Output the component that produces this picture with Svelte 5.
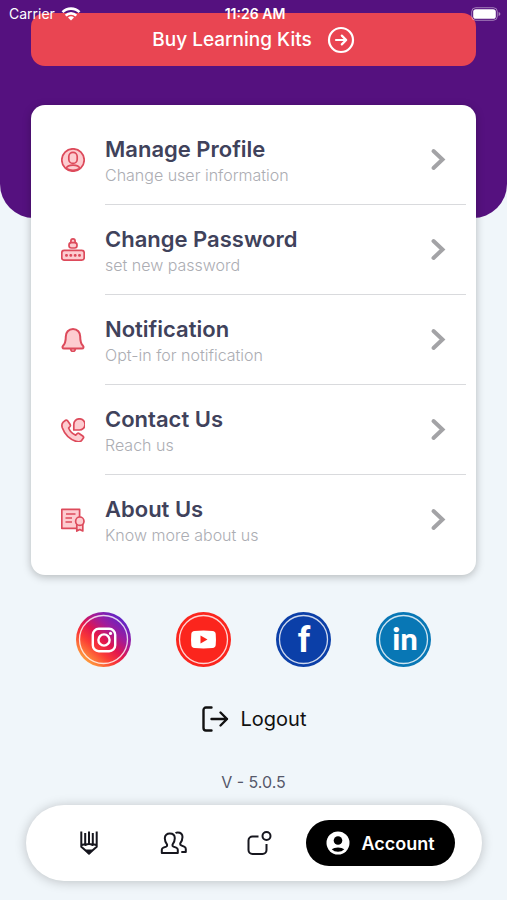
<script>
  const items = [
    { icon: 'profile', title: 'Manage Profile', text: 'Change user information' },
    { icon: 'password', title: 'Change Password', text: 'set new password' },
    { icon: 'bell', title: 'Notification', text: 'Opt-in for notification' },
    { icon: 'phone', title: 'Contact Us', text: 'Reach us' },
    { icon: 'about', title: 'About Us', text: 'Know more about us' }
  ];
</script>

<div class="status">
  <span class="carrier">
    Carrier
    <svg width="20" height="14" viewBox="0 0 20 14" fill="none" stroke="#fff" stroke-width="2.6">
      <path d="M1.5 5.2a12 12 0 0 1 17 0" />
      <path d="M4.7 8.6a7.5 7.5 0 0 1 10.6 0" />
      <path d="M10 13.6 7 10.6a4.3 4.3 0 0 1 6 0z" fill="#fff" stroke="none" />
    </svg>
  </span>
  <span class="time">11:26 AM</span>
  <svg class="battery" width="30" height="14" viewBox="0 0 30 14">
    <rect x="0.7" y="0.7" width="25.6" height="12.6" rx="4" fill="none" stroke="#fff" stroke-opacity="0.45" />
    <rect x="2.2" y="2.2" width="22.6" height="9.6" rx="2.6" fill="#fff" />
    <path d="M27.6 5v4q1.8-.5 1.8-2t-1.8-2z" fill="#fff" fill-opacity="0.5" />
  </svg>
</div>

<main>
  <header>
    <button class="buy">
      Buy Learning Kits
      <svg width="28" height="28" viewBox="0 0 28 28" fill="none" stroke="#fff" stroke-width="2.2" stroke-linecap="round" stroke-linejoin="round">
        <circle cx="14" cy="14" r="12" />
        <path d="M9 14h10M14.8 9.6 19.2 14l-4.4 4.4" />
      </svg>
    </button>
  </header>

  <!-- Menu -->
  <section class="card">
    {#each items as item}
      <button class="row">
        <svg class="icon" viewBox="0 0 24 24">
          {#if item.icon === 'profile'}
            <circle cx="12" cy="12" r="11.2" />
            <rect x="7.8" y="4.4" width="8.4" height="11" rx="4.2" />
            <path d="M5.2 20.4q1-3.2 6.8-3.2t6.8 3.2q-6.8 3.8-13.6 0z" />
          {:else if item.icon === 'password'}
            <rect x="0.8" y="12.4" width="22.4" height="9.8" rx="2.4" />
            <path d="M9.9 4.6V3a2.1 2.1 0 0 1 4.2 0v1.600" />
            <rect x="8" y="4.6" width="8" height="5.4" rx="2.4" />
            <path d="M5.500 16v2.800M4.100 17.400h2.800M9.800 16v2.800M8.400 17.400h2.800M14.200 16v2.800M12.800 17.400h2.800M18.500 16v2.800M17.100 17.400h2.800" />
          {:else if item.icon === 'bell'}
            <path d="M9.500 20.500q.5 3 2.500 3t2.500-3z" />
            <path d="M12 1C7.500 1 4.800 4.400 4.800 8.500c0 5-.6 7.200-2.800 9.300-1 1.200-.5 2.700 1 2.700h18c1.500 0 2-1.500 1-2.700-2.200-2.100-2.800-4.300-2.800-9.300C19.200 4.400 16.500 1 12 1z" stroke-width="2" />
          {:else if item.icon === 'phone'}
            <path d="M2.200 4.100 4.600 2.300q1-.6 1.800.3l2.800 4q.6 1-.2 1.900L7.600 10c1.200 3 4 5.800 7.100 7.100l1.500-1.400q.9-.8 1.900-.2l4 2.800q.9.800.3 1.800l-1.800 2.400c-1.300 1.500-3.500 1.700-5.600.9C8.500 21 3.600 16 1.300 9.700.6 7.600.8 5.500 2.200 4.100z" />
            <path d="M12.800 12V6.400a5.600 5.600 0 1 1 5.600 5.600z" />
          {:else}
            <rect x="0.8" y="1.3" width="17.8" height="19" />
            <path d="M5 6h9.500M4.500 10h6.500M4.500 14h6.500" />
            <path d="M15.800 16h6v7l-3-1.500-3 1.500z" />
            <circle cx="18.800" cy="13.200" r="4.200" />
          {/if}
        </svg>
        <span class="body">
          <span class="label">
            <strong>{item.title}</strong>
            <small>{item.text}</small>
          </span>
          <svg width="16" height="24" viewBox="0 0 16 24" fill="none" stroke="#a3a3a6" stroke-width="4" stroke-linecap="round">
            <path d="M3.500 3 12.500 11.500 3.500 20" />
          </svg>
        </span>
      </button>
    {/each}
  </section>

  <!-- Social links -->
  <div class="social">
    <a href="#instagram" aria-label="Instagram">
      <svg viewBox="0 0 55 55">
        <defs>
          <linearGradient id="insta" x1="0.15" y1="0.9" x2="0.85" y2="0.1">
            <stop offset="0" stop-color="#ffa53d" />
            <stop offset="0.3" stop-color="#fb3b35" />
            <stop offset="0.5" stop-color="#e0154f" />
            <stop offset="0.72" stop-color="#a01c9c" />
            <stop offset="1" stop-color="#5a25cb" />
          </linearGradient>
        </defs>
        <circle cx="27.5" cy="27.5" r="27.5" fill="url(#insta)" />
        <circle class="ring" cx="27.5" cy="27.5" r="24" />
        <g fill="none" stroke="#fff" stroke-width="2.4">
          <rect x="16.8" y="16.8" width="22.4" height="22.4" rx="6" />
          <circle cx="28" cy="28" r="5.6" />
        </g>
        <circle cx="34.5" cy="21.4" r="1.6" fill="#fff" />
      </svg>
    </a>
    <a href="#youtube" aria-label="YouTube">
      <svg viewBox="0 0 55 55">
        <circle cx="27.5" cy="27.5" r="27.5" fill="#fb251d" />
        <circle class="ring" cx="27.5" cy="27.5" r="24" />
        <path d="M18.500 19q9-.8 18 0 3 .3 3.200 3 .5 5.500 0 11-.2 2.700-3.200 3-9 .8-18 0-3-.3-3.200-3-.5-5.500 0-11 .2-2.700 3.200-3z" fill="#fff" />
        <path d="M24.500 23.500v8l7-4z" fill="#fb251d" />
      </svg>
    </a>
    <a href="#facebook" aria-label="Facebook">
      <svg viewBox="0 0 55 55">
        <circle cx="27.5" cy="27.5" r="27.5" fill="#0b3fa8" />
        <circle class="ring" cx="27.5" cy="27.5" r="24" />
        <text class="fb" x="28" y="40">f</text>
      </svg>
    </a>
    <a href="#linkedin" aria-label="LinkedIn">
      <svg viewBox="0 0 55 55">
        <circle cx="27.5" cy="27.5" r="27.5" fill="#0877b5" />
        <circle class="ring" cx="27.5" cy="27.5" r="24" />
        <text class="in" x="29" y="38">in</text>
      </svg>
    </a>
  </div>

  <button class="logout">
    <svg width="28" height="28" viewBox="0 0 28 28" fill="none" stroke="#111" stroke-width="2.4" stroke-linecap="round" stroke-linejoin="round">
      <path d="M10.500 2.500H5a2.500 2.500 0 0 0-2.500 2.500v18a2.500 2.500 0 0 0 2.500 2.500h5.500M10.500 14H26M19.500 7.500 26 14l-6.500 6.500" />
    </svg>
    Logout
  </button>

  <p class="version">V - 5.0.5</p>

  <!-- Tab bar -->
  <nav>
    <a class="tab" href="#learn" aria-label="Learn">
      <svg viewBox="0 0 28 28">
        <path d="M6.300 2.500v15.200L14 24.500l7.700-6.800V2.500M10.200 4v12M14 2.500V15M17.800 4v12M6.300 16.500q2.300-1.500 4-.5 3.700-2 7.400 0 1.700-1 4 .5" />
        <path d="M11.500 21.500h5L14 24.500z" fill="#16161e" />
      </svg>
    </a>
    <a class="tab" href="#community" aria-label="Community">
      <svg viewBox="0 0 28 28">
        <path d="M1.800 24v-3.200q0-1.600 1.600-2.200l2.800-1q1.300-.6.900-2C5.200 13.200 4.800 11.200 4.800 9.200 4.800 6.300 7 4.600 9.800 4.600s5 1.700 5 4.600c0 2-.4 4-2.300 6.400q-.4 1.400.9 2l2.800 1q1.600.6 1.600 2.200V24z" />
        <path d="M15.500 4q1-.6 2.200-.6c2.900 0 4.800 1.800 4.800 4.700 0 2.200-.6 4.200-2.300 6.300q-.3 1.500 1 2l2.900 1.200q1.700.7 1.700 2.400v3h-4.500" />
      </svg>
    </a>
    <a class="tab" href="#updates" aria-label="Updates">
      <svg viewBox="0 0 28 28">
        <path d="M13.500 7.500H7.500a4 4 0 0 0-4 4V21a4 4 0 0 0 4 4h10a4 4 0 0 0 4-4v-6" />
        <circle cx="21.5" cy="7" r="4" />
      </svg>
    </a>
    <a class="account" href="#account">
      <svg width="24" height="24" viewBox="0 0 24 24">
        <circle cx="12" cy="12" r="11.5" fill="#fff" />
        <circle cx="12" cy="9.500" r="4.3" fill="#000" />
        <path d="M5.700 18.200q2.300-1.700 6.300-1.700t6.300 1.700q-2.500 2.500-6.300 2.500t-6.300-2.500z" fill="#000" />
      </svg>
      Account
    </a>
  </nav>
</main>

<style>
  :global(body) {
    margin: 0;
    background: #f0f6fa;
    font-family: Inter, sans-serif;
  }

  button {
    border: none;
    background: none;
    font-family: inherit;
    cursor: pointer;
  }

  a {
    text-decoration: none;
  }

  .status {
    position: absolute;
    top: 0;
    left: 0;
    right: 0;
    z-index: 1;
    display: grid;
    grid-template-columns: 1fr auto 1fr;
    align-items: center;
    height: 27px;
    padding: 0 6px 0 9px;
    color: #fff;
    font-size: 14px;
  }

  .carrier {
    display: flex;
    align-items: center;
    gap: 6px;
  }

  .time {
    font-weight: 600;
  }

  .battery {
    justify-self: end;
  }

  header {
    box-sizing: border-box;
    height: 218px;
    padding: 13px 31px 0;
    background: #55117f;
    border-radius: 0 0 34px 34px;
  }

  .buy {
    display: flex;
    align-items: center;
    justify-content: center;
    gap: 15px;
    width: 100%;
    height: 53px;
    background: #e94552;
    border-radius: 14px;
    color: #fff;
    font-size: 19px;
    font-weight: 500;
  }

  .card {
    margin: -113px 31px 0;
    padding: 10px 0;
    background: #fff;
    border-radius: 14px;
    box-shadow: 0 2px 8px rgba(0, 0, 0, 0.25);
  }

  .row {
    display: flex;
    align-items: center;
    gap: 20px;
    width: 100%;
    padding: 0 10px 0 30px;
    text-align: left;
  }

  .icon {
    flex: none;
    width: 24px;
    height: 24px;
    fill: #fdccd0;
    stroke: #dd4a5b;
    stroke-width: 1.7;
    stroke-linejoin: round;
  }

  .body {
    flex: 1;
    display: flex;
    align-items: center;
    justify-content: space-between;
    box-sizing: border-box;
    height: 90px;
    padding-right: 20px;
    border-bottom: 1px solid #d9dadd;
  }

  .row:last-child .body {
    border-bottom: none;
  }

  .label {
    padding-top: 2px;
  }

  .label strong {
    display: block;
    color: #40425b;
    font-size: 22px;
    font-weight: 600;
    line-height: 28px;
  }

  .label small {
    display: block;
    color: #acadb3;
    font-size: 16px;
    font-weight: 300;
    line-height: 24px;
  }

  .social {
    display: flex;
    justify-content: center;
    gap: 45px;
    margin-top: 37px;
  }

  .social svg {
    display: block;
    width: 55px;
    height: 55px;
  }

  .ring {
    fill: none;
    stroke: #fff;
    stroke-opacity: 0.8;
    stroke-width: 1.3;
  }

  .social text {
    fill: #fff;
    font-family: Roboto, sans-serif;
    font-weight: 700;
    text-anchor: middle;
  }

  .social .fb {
    font-size: 35px;
  }

  .social .in {
    font-family: Lato, sans-serif;
    font-size: 31px;
    font-weight: 900;
  }

  .logout {
    display: flex;
    align-items: center;
    gap: 12px;
    height: 40px;
    margin: 32px auto 0;
    padding: 0;
    color: #111;
    font-size: 20px;
    font-weight: 400;
  }

  .version {
    margin: 31px 0 11px;
    color: #55586a;
    font-size: 16px;
    line-height: 24px;
    text-align: center;
  }

  nav {
    display: flex;
    align-items: center;
    height: 76px;
    margin: 0 25px 19px 26px;
    padding: 0 27px 0 20px;
    box-sizing: border-box;
    background: #fff;
    border-radius: 38px;
    box-shadow: 0 1px 12px rgba(0, 0, 0, 0.22);
  }

  .tab {
    flex: 1;
    display: flex;
    justify-content: center;
  }

  .tab svg {
    width: 28px;
    height: 28px;
    fill: none;
    stroke: #16161e;
    stroke-width: 2;
    stroke-linejoin: round;
  }

  .account {
    display: flex;
    align-items: center;
    justify-content: center;
    gap: 11px;
    width: 149px;
    height: 46px;
    margin-left: 5px;
    background: #000;
    border-radius: 23px;
    color: #fff;
    font-size: 18px;
    font-weight: 600;
  }
</style>
